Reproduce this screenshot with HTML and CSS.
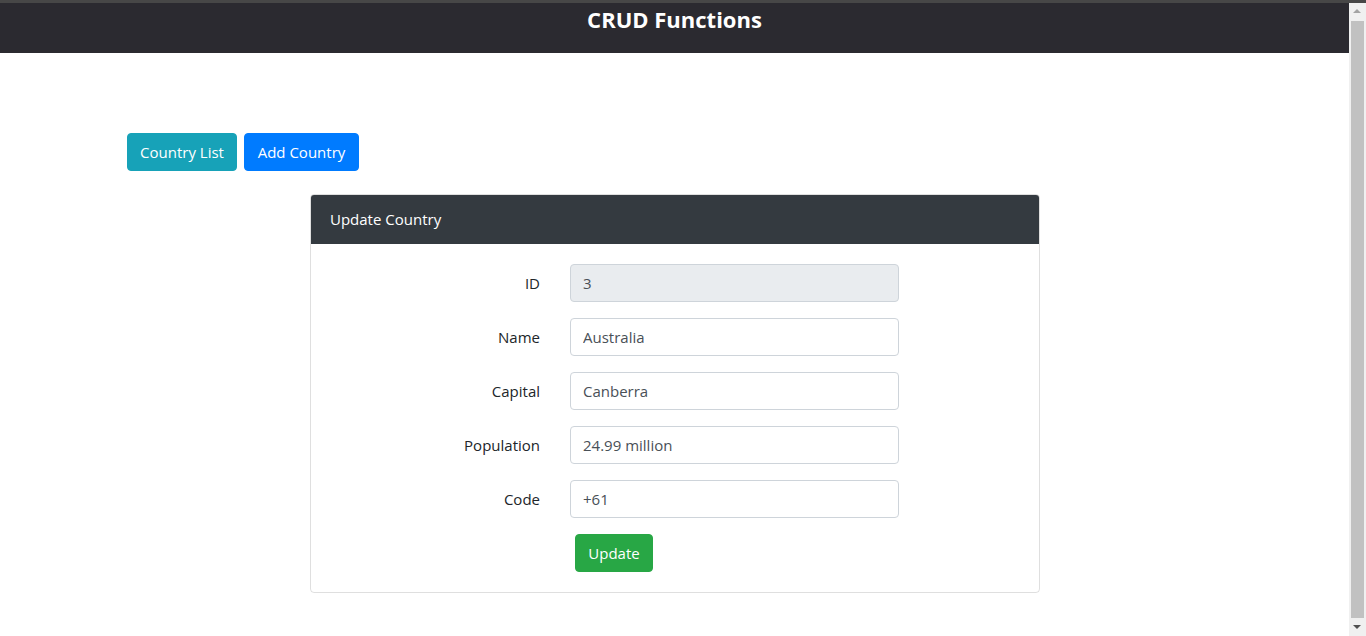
FILE: index.html
```html
<!DOCTYPE html>
<html lang="en">
<head>
<meta charset="utf-8">
<title>CRUD Functions</title>
<link rel="stylesheet" href="styles.css">
</head>
<body>
<div class="topstrip"></div>
<div class="frame">
  <div class="page">
    <header class="appbar"><h1 class="apptitle">CRUD Functions</h1></header>
    <main class="content">
      <nav class="actions">
        <button class="btn btn-info">Country List</button>
        <button class="btn btn-primary">Add Country</button>
      </nav>
      <section class="card">
        <div class="card-header">Update Country</div>
        <form class="card-body">
          <div class="form-row">
            <label class="form-label">ID</label>
            <input class="form-input" value="3" readonly disabled>
          </div>
          <div class="form-row">
            <label class="form-label">Name</label>
            <input class="form-input" value="Australia">
          </div>
          <div class="form-row">
            <label class="form-label">Capital</label>
            <input class="form-input" value="Canberra">
          </div>
          <div class="form-row">
            <label class="form-label">Population</label>
            <input class="form-input" value="24.99 million">
          </div>
          <div class="form-row">
            <label class="form-label">Code</label>
            <input class="form-input" value="+61">
          </div>
          <div class="form-row submit-row">
            <span class="form-label"></span>
            <button type="button" class="btn btn-success">Update</button>
          </div>
        </form>
      </section>
    </main>
  </div>
  <div class="scrollbar">
    <div class="sb-arrow sb-up"></div>
    <div class="sb-thumb"></div>
    <div class="sb-arrow sb-down"></div>
  </div>
</div>
</body>
</html>
```
FILE: styles.css
```css
* { box-sizing: border-box; }
html, body { margin: 0; padding: 0; height: 100%; overflow: hidden; }
body {
  font-family: "Open Sans", "Noto Sans", sans-serif;
  font-size: 16px;
  color: #212529;
  background: #fff;
  display: flex;
  flex-direction: column;
}
.topstrip { height: 3px; background: #474747; flex: none; }
.frame { flex: 1; display: flex; min-height: 0; }
.page { flex: 1; min-width: 0; }
.appbar {
  height: 50px;
  background: #2b2a30;
  display: flex;
  justify-content: center;
}
.apptitle {
  margin: 0;
  padding-top: 1px;
  font-size: 22px;
  font-weight: 700;
  line-height: 30px;
  color: #fff;
}
.content { padding: 80px 0 0 127px; }
.actions { display: flex; gap: 7px; }
.btn {
  font-family: inherit;
  font-size: 15px;
  line-height: 24px;
  height: 38px;
  padding: 0;
  white-space: nowrap;
  text-align: center;
  border: 1px solid transparent;
  border-radius: 4px;
  color: #fff;
  cursor: pointer;
}
.btn-info { background: #17a2b8; border-color: #17a2b8; width: 110px; }
.btn-primary { background: #007bff; border-color: #007bff; width: 115px; }
.btn-success { background: #28a745; border-color: #28a745; width: 78px; margin-left: 5px; }
.card {
  width: 730px;
  margin: 23px 0 0 183px;
  border: 1px solid rgba(0,0,0,.125);
  border-radius: 4px;
  overflow: hidden;
}
.card-header {
  background: #343a40;
  color: #fff;
  height: 49px;
  padding: 12px 19px 13px;
  line-height: 24px;
  font-size: 15px;
}
.card-body {
  padding: 20px 20px 20px;
  display: flex;
  flex-direction: column;
  gap: 16px;
}
.form-row { display: flex; align-items: center; }
.form-label {
  width: 209px;
  text-align: right;
  margin-right: 30px;
  font-size: 15px;
}
.form-input {
  width: 329px;
  height: 38px;
  padding: 6px 12px;
  font-family: inherit;
  font-size: 15px;
  color: #495057;
  background: #fff;
  border: 1px solid #ced4da;
  border-radius: 4px;
}
.form-input:disabled { background: #e9ecef; color: #495057; opacity: 1; }
.scrollbar {
  width: 17px;
  flex: none;
  background: #f0f0f0;
  display: flex;
  flex-direction: column;
  align-items: center;
}
.sb-arrow { width: 17px; height: 17px; position: relative; flex: none; }
.sb-up::after, .sb-down::after {
  content: "";
  position: absolute;
  left: 4px;
  border-left: 4.5px solid transparent;
  border-right: 4.5px solid transparent;
}
.sb-up::after { top: 6px; border-bottom: 4px solid #a3a3a3; }
.sb-down::after { top: 6px; border-top: 4px solid #505050; }
.sb-thumb { width: 13px; flex: 1; background: #c1c1c1; margin: 1px 0; }
```
